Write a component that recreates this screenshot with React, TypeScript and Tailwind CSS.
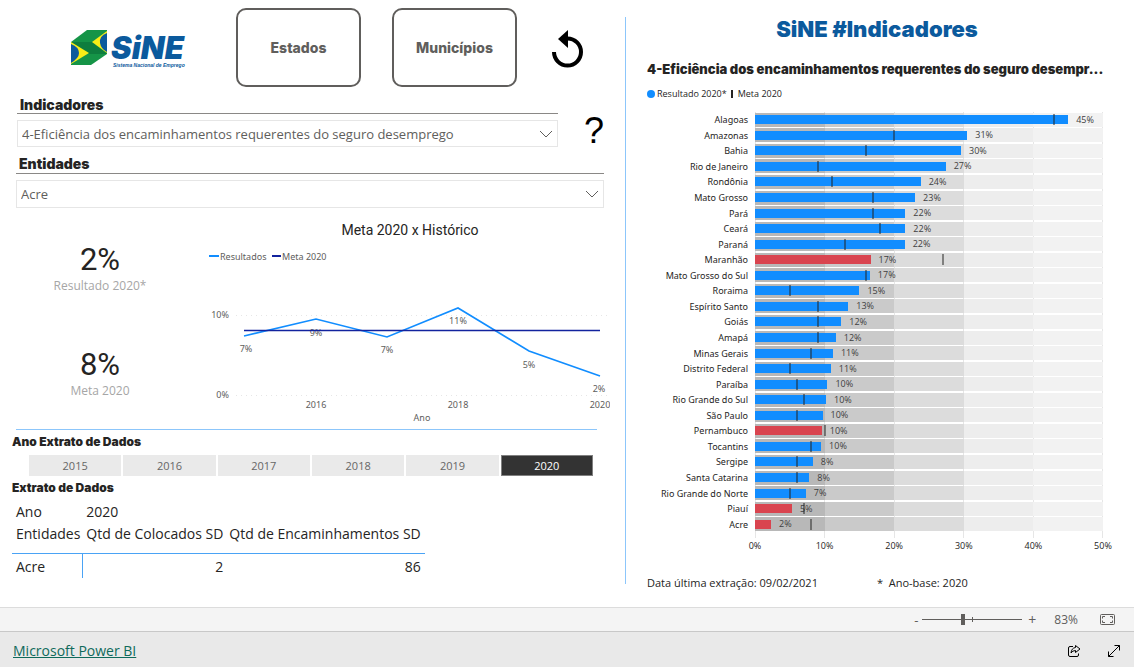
import { useState } from 'react';

const heading = "font-['Inter',sans-serif] font-black text-[#252423]";

const states = [
  { name: 'Alagoas', value: 45, goal: 43 },
  { name: 'Amazonas', value: 30.5, goal: 20 },
  { name: 'Bahia', value: 29.6, goal: 16 },
  { name: 'Rio de Janeiro', value: 27.4, goal: 9 },
  { name: 'Rondônia', value: 23.8, goal: 11 },
  { name: 'Mato Grosso', value: 23, goal: 17 },
  { name: 'Pará', value: 21.6, goal: 17 },
  { name: 'Ceará', value: 21.6, goal: 18 },
  { name: 'Paraná', value: 21.5, goal: 13 },
  { name: 'Maranhão', value: 16.6, goal: 27 },
  { name: 'Mato Grosso do Sul', value: 16.5, goal: 16 },
  { name: 'Roraima', value: 15, goal: 5 },
  { name: 'Espírito Santo', value: 13.4, goal: 9 },
  { name: 'Goiás', value: 12.4, goal: 9 },
  { name: 'Amapá', value: 11.6, goal: 9 },
  { name: 'Minas Gerais', value: 11.2, goal: 8 },
  { name: 'Distrito Federal', value: 10.9, goal: 5 },
  { name: 'Paraíba', value: 10.4, goal: 6 },
  { name: 'Rio Grande do Sul', value: 10.2, goal: 7 },
  { name: 'São Paulo', value: 9.7, goal: 6 },
  { name: 'Pernambuco', value: 9.6, goal: 10 },
  { name: 'Tocantins', value: 9.5, goal: 8 },
  { name: 'Sergipe', value: 8.3, goal: 6 },
  { name: 'Santa Catarina', value: 7.8, goal: 6 },
  { name: 'Rio Grande do Norte', value: 7.3, goal: 5 },
  { name: 'Piauí', value: 5.3, goal: 7 },
  { name: 'Acre', value: 2.3, goal: 8 },
];

const history = [
  { x: 40, y: 116, label: '7%', lx: 42, ly: 132 },
  { x: 112, y: 99, label: '9%', lx: 112, ly: 116 },
  { x: 183, y: 117, label: '7%', lx: 183, ly: 133 },
  { x: 254, y: 88, label: '11%', lx: 254, ly: 104 },
  { x: 325, y: 131, label: '5%', lx: 325, ly: 148 },
  { x: 396, y: 156, label: '2%', lx: 395, ly: 172 },
];

const years = [2015, 2016, 2017, 2018, 2019, 2020];

const Logo = () => (
  <div className="flex w-[116px] items-start">
    <svg viewBox="0 0 37 36" className="h-9 w-[37px] shrink-0" aria-hidden="true">
      <path d="M17 0H37V24L21 35H1V12Z" fill="#159447" />
      <path d="M1 12H22L37 24H19Z" fill="#0e7d3e" />
      <path d="M1 12L19 23L1 34Z" fill="#f8ec17" />
      <path d="M1 14Q9 17 9 23Q9 28 1 33Z" fill="#0b5a9d" />
      <path d="M37 1L22 12L37 23Z" fill="#f8ec17" />
      <path d="M37 3Q29 6 30 13Q31 19 37 22Z" fill="#0b5a9d" />
    </svg>
    <div className="pl-1 text-[#0b5a9d]">
      <p className="pt-1 font-['Inter',sans-serif] text-[31px] leading-7 font-black italic">SiNE</p>
      <p className="pl-0.5 font-['Liberation_Sans',sans-serif] text-[5px] leading-[6px] font-bold whitespace-nowrap italic">
        Sistema Nacional de Emprego
      </p>
    </div>
  </div>
);

const Dropdown = ({ id, options, className }: { id: string; options: string[]; className: string }) => (
  <div className={`relative border border-[#e6e6e6] ${className}`}>
    <select
      id={id}
      className="block h-full w-full appearance-none bg-transparent pt-0.5 pr-8 pl-1 font-['Open_Sans',sans-serif] text-[13px] text-[#605e5c] outline-none"
    >
      {options.map((option) => (
        <option key={option}>{option}</option>
      ))}
    </select>
    <svg
      viewBox="0 0 14 8"
      className="pointer-events-none absolute top-1/2 right-1 h-2 w-3.5 -translate-y-1/2 fill-none stroke-[#605e5c]"
      aria-hidden="true"
    >
      <path d="M1 1L7 7L13 1" />
    </svg>
  </div>
);

const Kpi = ({ value, label }: { value: string; label: string }) => (
  <div className="text-center">
    <p className="font-['Roboto',sans-serif] text-[31px] leading-9 text-[#252423]">{value}</p>
    <p className="text-xs text-[#a6a6a6]">{label}</p>
  </div>
);

const HistoryChart = () => (
  <svg viewBox="0 0 406 206" className="w-full font-['Noto_Sans',sans-serif] text-[9px]" role="img" aria-label="Meta 2020 x Histórico">
    <text x="206" y="15" textAnchor="middle" className="fill-[#252423] font-['Roboto',sans-serif] text-[14px]">
      Meta 2020 x Histórico
    </text>
    <g className="fill-[#605e5c]">
      <path d="M5 36H15" stroke="#118dff" strokeWidth="2" />
      <text x="16" y="40">Resultados</text>
      <path d="M68 36H77" stroke="#12239e" strokeWidth="2" />
      <text x="78" y="40">Meta 2020</text>
    </g>
    <path d="M32 95.500H404M32 175.500H404" stroke="#e6e6e6" strokeDasharray="1 4" />
    <g className="fill-[#605e5c]">
      <text x="25" y="98" textAnchor="end">10%</text>
      <text x="25" y="178" textAnchor="end">0%</text>
      {history.map((point) => (
        <text key={point.x} x={point.lx} y={point.ly} textAnchor="middle">
          {point.label}
        </text>
      ))}
      <text x="112" y="188" textAnchor="middle">2016</text>
      <text x="254" y="188" textAnchor="middle">2018</text>
      <text x="396" y="188" textAnchor="middle">2020</text>
      <text x="218" y="201" textAnchor="middle">Ano</text>
    </g>
    <polyline
      points={history.map((point) => `${point.x},${point.y}`).join(' ')}
      fill="none"
      stroke="#118dff"
      strokeWidth="1.6"
    />
    <path d="M40 110.500H396" stroke="#12239e" strokeWidth="1.6" />
  </svg>
);

const StateChart = () => (
  <div className="text-[9px] leading-3 text-[#252423]">
    <div className="relative">
      {/* Vertical grid lines */}
      <div className="absolute top-0 right-0 -bottom-1.5 left-[108px] flex border-l border-[#e6e6e6]">
        {[10, 20, 30, 40, 50].map((tick) => (
          <div key={tick} className="flex-1 border-r border-[#e6e6e6]" />
        ))}
      </div>
      <div className="relative grid h-[420px] grid-rows-[repeat(27,minmax(0,1fr))]">
        {states.map((state) => (
          <div key={state.name} className="flex items-center">
            <p className="w-[101px] shrink-0 pt-px text-right font-['Noto_Sans',sans-serif] whitespace-nowrap">{state.name}</p>
            <div className="relative ml-[7px] flex h-[14px] flex-1 items-center">
              <div className="absolute inset-0 flex" aria-hidden="true">
                <div className="flex-1 bg-[#b8b8b8]" />
                <div className="flex-1 bg-[#cacaca]" />
                <div className="flex-1 bg-[#dcdcdc]" />
                <div className="flex-1 bg-[#ededed]" />
                <div className="flex-1 bg-[#f2f2f2]" />
              </div>
              <div
                className={`relative h-[9px] shrink-0 ${state.value < state.goal ? 'bg-[#d9444f]' : 'bg-[#118dff]'}`}
                style={{ width: `${state.value * 2}%` }}
              />
              <span className="relative pl-2 text-[#404040]">{Math.round(state.value)}%</span>
              <div className="absolute h-[11px] w-px -translate-x-1/2 bg-[#252423]" style={{ left: `${state.goal * 2}%` }} />
            </div>
          </div>
        ))}
      </div>
    </div>
    <div className="-mr-3.5 ml-[94px] flex justify-between pt-2">
      {[0, 10, 20, 30, 40, 50].map((tick) => (
        <span key={tick} className="w-7 text-center">
          {tick}%
        </span>
      ))}
    </div>
  </div>
);

const App = () => {
  const [year, setYear] = useState(2020);

  return (
    <div className="flex min-h-screen flex-col bg-white font-['Open_Sans',sans-serif] text-[#252423]">
      <main className="grid flex-1 grid-cols-[626fr_508fr]">
        <section className="relative pr-[22px]">
          <div className="absolute top-[17px] right-0 bottom-[23px] w-px bg-[#8cc6fb]" />

          {/* Header */}
          <header className="flex items-start pt-2">
            <div className="w-[236px] shrink-0 pt-[22px] pl-[70px]">
              <Logo />
            </div>
            <div className="flex gap-[31px] font-['Inter',sans-serif] text-[14px] font-extrabold text-[#605e5c]">
              <button className="h-[79px] w-[125px] rounded-[10px] border-2 border-[#605e5c]">Estados</button>
              <button className="h-[79px] w-[125px] rounded-[10px] border-2 border-[#605e5c]">Municípios</button>
            </div>
            <button className="mt-[21px] ml-[34px]" aria-label="Redefinir">
              <svg viewBox="0 0 34 39" className="h-[39px] w-[34px]" aria-hidden="true">
                <path d="M3 23A13.500 13.500 0 1 0 16.500 9.500" fill="none" stroke="#000" strokeWidth="4" />
                <path d="M17 1V19L7 10Z" />
              </svg>
            </button>
          </header>

          {/* Filters */}
          <div className="flex items-start pt-2.5 pl-[17px]">
            <div className="flex-1">
              <label htmlFor="indicador" className={`block border-b border-[#8a8886] pl-[3px] text-[14px] leading-4 ${heading}`}>
                Indicadores
              </label>
              <Dropdown
                id="indicador"
                className="mt-1.5 h-[27px]"
                options={['4-Eficiência dos encaminhamentos requerentes do seguro desemprego']}
              />
            </div>
            <button className="mt-[17px] ml-[26px] font-['Liberation_Sans',sans-serif] text-[36px] leading-[33px] text-black">?</button>
          </div>
          <div className="pt-2 pl-4">
            <label htmlFor="entidade" className={`block border-b border-[#8a8886] pl-[3px] text-[14px] leading-[18px] ${heading}`}>
              Entidades
            </label>
            <Dropdown id="entidade" className="mt-1.5 h-7" options={['Acre']} />
          </div>

          {/* Results */}
          <div className="flex items-start">
            <div className="flex w-[200px] shrink-0 flex-col gap-[53px] pt-[34px]">
              <Kpi value="2%" label="Resultado 2020*" />
              <Kpi value="8%" label="Meta 2020" />
            </div>
            <div className="-mr-1.5 flex-1 pt-3 pl-1">
              <HistoryChart />
            </div>
          </div>

          {/* Data extract */}
          <div className="pt-[3px] pl-3">
            <div className="mr-[7px] ml-1 border-t border-[#8cc6fb]" />
            <h2 className={`pt-1 text-[12px] leading-4 ${heading}`}>Ano Extrato de Dados</h2>
            <div className="flex gap-0.5 pt-[5px] pr-[11px] pl-[17px]">
              {years.map((item) => (
                <button
                  key={item}
                  onClick={() => setYear(item)}
                  className={`h-[21px] flex-1 border text-[11px] leading-4 ${
                    item === year ? 'border-[#808080] bg-[#333333] text-white' : 'border-[#eaeaea] bg-[#eaeaea] text-[#666666]'
                  }`}
                >
                  {item}
                </button>
              ))}
            </div>
            <h2 className={`pt-1 text-[12px] leading-4 ${heading}`}>Extrato de Dados</h2>
            <table className="mt-[5px] text-[14px] leading-[22px]">
              <thead>
                <tr className="text-left">
                  <th className="pl-1 font-normal">Ano</th>
                  <th className="pl-1 font-normal" colSpan={2}>2020</th>
                </tr>
                <tr className="border-b border-[#4aa3f5] text-left">
                  <th className="pr-0.5 pb-2 pl-1 font-normal">Entidades</th>
                  <th className="pr-0.5 pb-2 pl-1 font-normal">Qtd de Colocados SD</th>
                  <th className="pr-1 pb-2 pl-1 font-normal">Qtd de Encaminhamentos SD</th>
                </tr>
              </thead>
              <tbody>
                <tr>
                  <td className="border-r border-[#4aa3f5] pt-0.5 pl-1">Acre</td>
                  <td className="pt-0.5 pr-0.5 text-right">2</td>
                  <td className="pt-0.5 pr-1 text-right">86</td>
                </tr>
              </tbody>
            </table>
          </div>
        </section>

        {/* State ranking */}
        <section className="pt-3.5 pr-[31px] pl-[21px]">
          <h1 className="pl-1 text-center font-['Inter',sans-serif] text-[22px] leading-[30px] font-black text-[#0b5a9d]">
            SiNE #Indicadores
          </h1>
          <h2 className={`-mr-4 pt-4 text-[13px] leading-[18px] whitespace-nowrap ${heading}`}>
            4-Eficiência dos encaminhamentos requerentes do seguro desempr...
          </h2>
          <div className="flex items-center pt-2.5 pb-3 text-[9px] leading-3">
            <span className="mr-0.5 size-2 rounded-full bg-[#118dff]" />
            Resultado 2020*
            <span className="mr-[5px] ml-1 h-2 w-0.5 bg-[#252423]" />
            Meta 2020
          </div>
          <StateChart />
          <div className="flex gap-[59px] pt-[23px] text-[11px] leading-4">
            <p>Data última extração: 09/02/2021</p>
            <p>*&nbsp; Ano-base: 2020</p>
          </div>
        </section>
      </main>

      {/* Zoom bar */}
      <div className="flex h-6 items-center justify-end border-t border-[#dcdcdc] bg-[#f4f4f4] pr-[19px] text-[#605e5c]">
        <button className="w-3 text-[13px] leading-4" aria-label="Diminuir zoom">-</button>
        <div className="relative flex h-3 w-[100px] items-center">
          <input
            type="range"
            min={0}
            max={100}
            defaultValue={40}
            aria-label="Zoom"
            className="h-3 w-full appearance-none bg-transparent [&::-webkit-slider-runnable-track]:h-px [&::-webkit-slider-runnable-track]:bg-[#605e5c] [&::-webkit-slider-thumb]:-mt-[5px] [&::-webkit-slider-thumb]:h-[11px] [&::-webkit-slider-thumb]:w-1 [&::-webkit-slider-thumb]:appearance-none [&::-webkit-slider-thumb]:bg-[#605e5c]"
          />
          <span className="pointer-events-none absolute left-1/2 h-[5px] w-px bg-[#605e5c]" />
        </div>
        <button className="w-5 text-sm leading-4" aria-label="Aumentar zoom">+</button>
        <span className="mr-[22px] ml-3 text-xs">83%</span>
        <button aria-label="Ajustar à página">
          <svg viewBox="0 0 15 11" className="h-[11px] w-[15px] fill-none stroke-[#605e5c]" aria-hidden="true">
            <rect x="0.500" y="0.500" width="14" height="10" rx="1" />
            <path d="M5 2.500H2.500V4.500M2.500 6.500V8.500H5M10 2.500H12.500V4.500M12.500 6.500V8.500H10" />
          </svg>
        </button>
      </div>

      <footer className="flex h-9 items-center border-t border-[#c8c8c8] bg-[#e9e9e9] px-[13px] pt-0.5">
        <a href="#powerbi" className="text-sm text-[#0f6a5b] underline">
          Microsoft Power BI
        </a>
        <button className="ml-auto" aria-label="Compartilhar">
          <svg viewBox="0 0 14 14" className="size-3.5 fill-none stroke-black" aria-hidden="true">
            <path d="M6 2.500H3Q1.500 2.500 1.500 4V11Q1.500 12.500 3 12.500H10Q11.500 12.500 11.500 11V9.500" />
            <path d="M8.500 1.500L13 5L8.500 8.500V6.500Q5.500 6.500 4 9Q4.500 4 8.500 3.500Z" />
          </svg>
        </button>
        <button className="ml-[26px]" aria-label="Tela inteira">
          <svg viewBox="0 0 14 14" className="size-3.5 fill-none stroke-black" aria-hidden="true">
            <path d="M1.500 12.500L12.500 1.500M7.500 1.500H12.500V6.500M1.500 7.500V12.500H6.500" />
          </svg>
        </button>
      </footer>
    </div>
  );
};

export default App;
